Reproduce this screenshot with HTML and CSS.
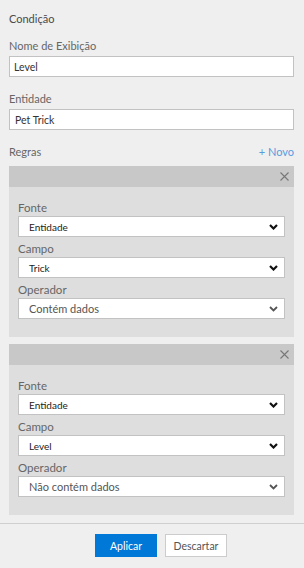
FILE: index.html
```html
<!DOCTYPE html>
<html lang="pt-BR">
<head>
    <meta charset="UTF-8">
    <meta name="viewport" content="width=device-width, initial-scale=1.0">
    <title>Condição</title>
    <link rel="stylesheet" href="styles.css">
</head>
<body>
    <div class="panel">
        <div class="panel-body">
            <h2 class="panel-title">Condição</h2>

            <label class="field-label">Nome de Exibição</label>
            <input class="text-input" type="text" value="Level">

            <label class="field-label field-label-spaced">Entidade</label>
            <input class="text-input text-input-wide" type="text" value="Pet Trick">

            <div class="rules-head">
                <span>Regras</span>
                <a class="add-link" href="#">+ Novo</a>
            </div>

            <div class="rule-card">
                <div class="rule-card-head">
                    <span class="rule-remove">
                        <svg width="9" height="9" viewBox="0 0 9 9"><path d="M0.5 0.5 L8.5 8.5 M8.5 0.5 L0.5 8.5" stroke="#777" stroke-width="1.1" fill="none"/></svg>
                    </span>
                </div>
                <div class="rule-card-body">
                    <label class="rule-label">Fonte</label>
                    <div class="select select-small">
                        <span>Entidade</span>
                        <svg class="chevron" width="9" height="6" viewBox="0 0 9 6"><path d="M1 1 L4.5 4.5 L8 1" stroke="#111" stroke-width="2.2" fill="none"/></svg>
                    </div>

                    <label class="rule-label">Campo</label>
                    <div class="select select-small">
                        <span>Trick</span>
                        <svg class="chevron" width="9" height="6" viewBox="0 0 9 6"><path d="M1 1 L4.5 4.5 L8 1" stroke="#111" stroke-width="2.2" fill="none"/></svg>
                    </div>

                    <label class="rule-label">Operador</label>
                    <div class="select select-large">
                        <span>Contém dados</span>
                        <svg class="chevron" width="9" height="6" viewBox="0 0 9 6"><path d="M1 1 L4.5 4.5 L8 1" stroke="#555" stroke-width="1.8" fill="none"/></svg>
                    </div>
                </div>
            </div>

            <div class="rule-card">
                <div class="rule-card-head">
                    <span class="rule-remove">
                        <svg width="9" height="9" viewBox="0 0 9 9"><path d="M0.5 0.5 L8.5 8.5 M8.5 0.5 L0.5 8.5" stroke="#777" stroke-width="1.1" fill="none"/></svg>
                    </span>
                </div>
                <div class="rule-card-body">
                    <label class="rule-label">Fonte</label>
                    <div class="select select-small">
                        <span>Entidade</span>
                        <svg class="chevron" width="9" height="6" viewBox="0 0 9 6"><path d="M1 1 L4.5 4.5 L8 1" stroke="#111" stroke-width="2.2" fill="none"/></svg>
                    </div>

                    <label class="rule-label">Campo</label>
                    <div class="select select-small">
                        <span>Level</span>
                        <svg class="chevron" width="9" height="6" viewBox="0 0 9 6"><path d="M1 1 L4.5 4.5 L8 1" stroke="#111" stroke-width="2.2" fill="none"/></svg>
                    </div>

                    <label class="rule-label">Operador</label>
                    <div class="select select-large">
                        <span>Não contém dados</span>
                        <svg class="chevron" width="9" height="6" viewBox="0 0 9 6"><path d="M1 1 L4.5 4.5 L8 1" stroke="#555" stroke-width="1.8" fill="none"/></svg>
                    </div>
                </div>
            </div>
        </div>

        <div class="panel-footer">
            <button class="btn btn-primary">Aplicar</button>
            <button class="btn btn-default">Descartar</button>
        </div>
    </div>
</body>
</html>
```

FILE: styles.css
```css
body {
    margin: 0;
    background: #efefef;
    font-family: Lato, "Liberation Sans", sans-serif;
    color: #444;
}

.panel {
    width: 304px;
    height: 568px;
    background: #efefef;
}

.panel-body {
    padding: 9px 10px 8px 9px;
}

.panel-title {
    margin: 0;
    font-size: 11px;
    font-weight: normal;
    line-height: 20px;
    color: #4a4a4a;
}

.field-label {
    display: block;
    margin-top: 7px;
    font-size: 11px;
    line-height: 20px;
    color: #666;
}

.field-label-spaced {
    margin-top: 12px;
}

.text-input {
    display: block;
    box-sizing: border-box;
    width: 100%;
    height: 21px;
    margin: 0;
    padding: 0 4px;
    border: 1px solid #c2c2c2;
    background: #fff;
    font-family: inherit;
    font-size: 10.5px;
    color: #333;
    outline: none;
}

.text-input-wide {
    padding-left: 5px;
}

.rules-head {
    display: flex;
    justify-content: space-between;
    align-items: center;
    margin: 12px 0 4px 0;
    font-size: 11px;
    line-height: 20px;
    color: #666;
}

.add-link {
    color: #5a9be0;
    text-decoration: none;
}

.rule-card {
    background: #dedede;
    margin-bottom: 7px;
}

.rule-card:last-child {
    margin-bottom: 0;
}

.rule-card-head {
    height: 21px;
    background: #c8c8c8;
    display: flex;
    justify-content: flex-end;
    align-items: center;
    padding-right: 5px;
}

.rule-remove {
    display: flex;
    cursor: pointer;
}

.rule-card-body {
    padding: 13px 9px 18px 9px;
}

.rule-label {
    display: block;
    margin-top: 4px;
    font-size: 11.5px;
    line-height: 16px;
    color: #666;
}

.rule-label:first-child {
    margin-top: 0;
}

.select {
    box-sizing: border-box;
    height: 21px;
    display: flex;
    align-items: center;
    justify-content: space-between;
    padding: 0 6px 0 10px;
    background: #fff;
    border: 1px solid #c2c2c2;
}

.select-small {
    font-size: 10px;
    color: #222;
}

.select-large {
    font-size: 11px;
    color: #555;
}

.panel-footer {
    border-top: 1px solid #cfcfcf;
    padding: 10px 0 0 18px;
    display: flex;
    justify-content: center;
    gap: 8px;
}

.btn {
    box-sizing: border-box;
    width: 62px;
    height: 23px;
    padding: 0;
    font-family: inherit;
    font-size: 10.5px;
    cursor: pointer;
}

.btn-primary {
    background: #0078d7;
    border: 1px solid #0078d7;
    color: #fff;
}

.btn-default {
    background: #fff;
    border: 1px solid #cccccc;
    color: #555;
}
```
